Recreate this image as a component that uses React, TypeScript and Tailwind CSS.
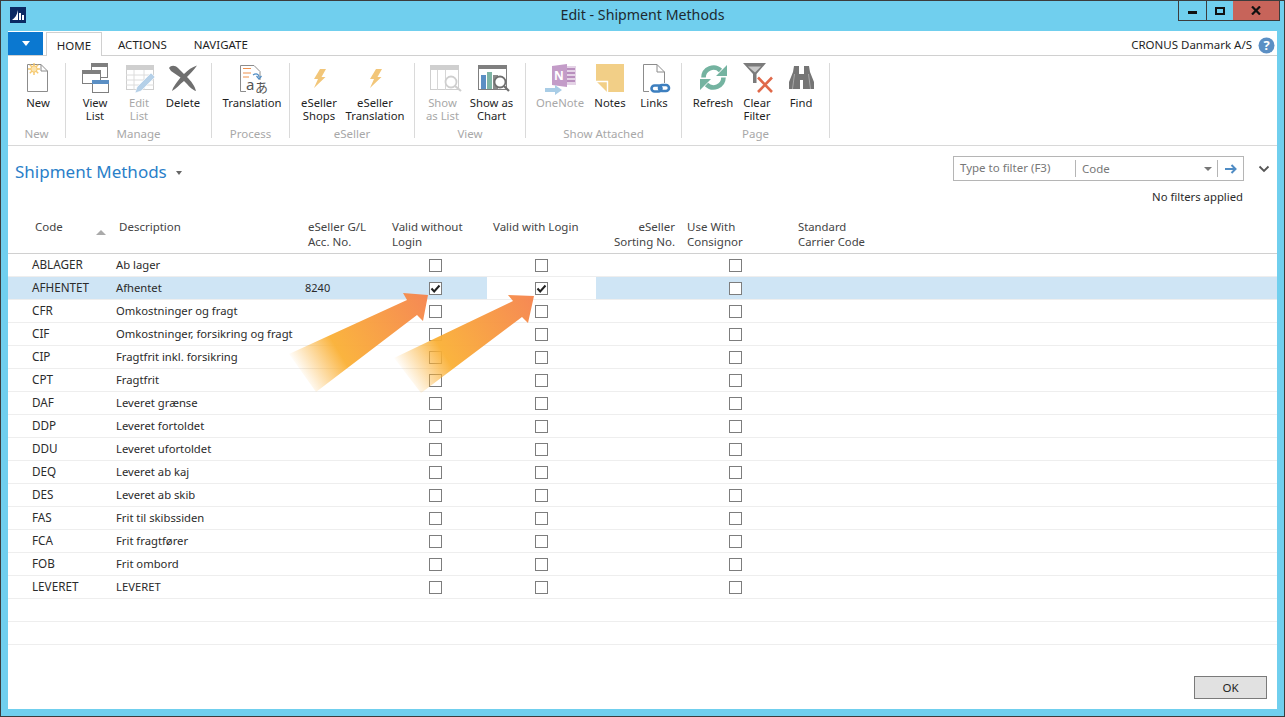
import React from 'react';

const font = { fontFamily: '"Noto Sans", "Open Sans", "Noto Sans CJK JP", sans-serif' };

type Row = { code: string; desc: string; gl?: string; a?: boolean; b?: boolean; selected?: boolean };

const rows: Row[] = [
  { code: 'ABLAGER', desc: 'Ab lager' },
  { code: 'AFHENTET', desc: 'Afhentet', gl: '8240', a: true, b: true, selected: true },
  { code: 'CFR', desc: 'Omkostninger og fragt' },
  { code: 'CIF', desc: 'Omkostninger, forsikring og fragt' },
  { code: 'CIP', desc: 'Fragtfrit inkl. forsikring' },
  { code: 'CPT', desc: 'Fragtfrit' },
  { code: 'DAF', desc: 'Leveret grænse' },
  { code: 'DDP', desc: 'Leveret fortoldet' },
  { code: 'DDU', desc: 'Leveret ufortoldet' },
  { code: 'DEQ', desc: 'Leveret ab kaj' },
  { code: 'DES', desc: 'Leveret ab skib' },
  { code: 'FAS', desc: 'Frit til skibssiden' },
  { code: 'FCA', desc: 'Frit fragtfører' },
  { code: 'FOB', desc: 'Frit ombord' },
  { code: 'LEVERET', desc: 'LEVERET' },
];

const cols = 'grid grid-cols-[24px_84px_189px_84px_98px_109px_88px_111px_1fr]';

function Icon({ children }: { children: React.ReactNode }) {
  return (
    <svg width="32" height="32" viewBox="0 0 32 32" className="shrink-0 overflow-visible">
      {children}
    </svg>
  );
}

const NewIcon = () => (
  <Icon>
    <path d="M5.5 2.5 H19 L25.5 9 V29.5 H5.5 Z M19 2.5 V9 H25.5" fill="#fff" stroke="#8c8c8c" />
    <g stroke="#f5c76a" strokeWidth="1.4">
      <path d="M12 1 V13 M6 7 H18 M7.8 2.8 L16.2 11.2 M16.2 2.8 L7.8 11.2" />
    </g>
    <circle cx="12" cy="7" r="3.2" fill="#fbe3ae" stroke="#f5c76a" />
  </Icon>
);

const ViewListIcon = () => (
  <Icon>
    <rect x="12.5" y="1.5" width="16" height="14" fill="#fff" stroke="#7f7f7f" />
    <rect x="12" y="1" width="17" height="4" fill="#7f7f7f" />
    <rect x="3.5" y="8.5" width="18" height="13" fill="#fff" stroke="#7f7f7f" />
    <rect x="3" y="8" width="19" height="4" fill="#7f7f7f" />
    <rect x="13.5" y="18.5" width="16" height="12" fill="#fff" stroke="#7f7f7f" />
    <rect x="13" y="18" width="17" height="4" fill="#5b8fc4" />
  </Icon>
);

const EditListIcon = () => (
  <Icon>
    <rect x="3.5" y="3.5" width="27" height="24" fill="#fff" stroke="#cfcfcf" />
    <rect x="3" y="3" width="28" height="5" fill="#cfcfcf" />
    <path d="M3 13 H31 M3 18 H31 M3 23 H31 M11 8 V28 M21 8 V28" stroke="#dcdcdc" />
    <path d="M12 31 L14 25 L28 11 L32 15 L18 29 Z" fill="#b5d0e8" stroke="#fff" strokeWidth="0.6" />
  </Icon>
);

const DeleteIcon = () => (
  <Icon>
    <path
      d="M2 6 C4 3 8 3 11 6 L17 12 C21 8 25 5 30 3.5 C27 8 23 12 20 15 C24 19 28 24 29 29 C25 28 21 23 17 19 C13 22 9 27 5 29 C6 25 10 20 13.5 15.5 L4 9 Z"
      fill="#6f6f6f"
    />
  </Icon>
);

const TranslationIcon = () => (
  <Icon>
    <path d="M4.5 3.5 H18 L24 9.5 V29.5 H4.5 Z" fill="#fff" stroke="#8c8c8c" />
    <path d="M7 6.5 H15 M7 11 H15 M7 15 H13" stroke="#f0914d" strokeWidth="1.2" />
    <path d="M17 13 C20 11 23 12 23 15" fill="none" stroke="#4f8cc4" strokeWidth="1.2" />
    <path d="M20.5 14 L23 17 L25.5 14" fill="none" stroke="#4f8cc4" strokeWidth="1.2" />
    <rect x="10" y="18" width="23" height="13" fill="#fff" />
    <text x="10" y="28" fontSize="15" fill="#555" style={font}>a</text>
    <text x="19" y="30" fontSize="13" fill="#555" style={font}>あ</text>
  </Icon>
);

const BoltIcon = () => (
  <Icon>
    <path d="M17 7 L23 7 L18.5 15 L22.5 15 L11 26 L15 17 L11 17 Z" fill="#f2c679" />
  </Icon>
);

const ShowListIcon = () => (
  <Icon>
    <rect x="3.5" y="3.5" width="28" height="24" fill="#fff" stroke="#cfcfcf" />
    <rect x="3" y="3" width="29" height="5" fill="#cfcfcf" />
    <path d="M10.5 8 V28 M18.5 8 V28" stroke="#d6d6d6" />
    <circle cx="24" cy="20" r="5.5" fill="#fff" stroke="#cfcfcf" strokeWidth="1.8" />
    <path d="M28 24 L34 29" stroke="#cfcfcf" strokeWidth="2.2" />
  </Icon>
);

const ShowChartIcon = () => (
  <Icon>
    <rect x="2.5" y="3.5" width="28" height="24" fill="#fff" stroke="#7f7f7f" />
    <rect x="2" y="3" width="29" height="4" fill="#7f7f7f" />
    <rect x="5" y="13" width="5" height="14" fill="#5b8fc4" />
    <rect x="11" y="10" width="5" height="17" fill="#7eb5a5" />
    <rect x="17" y="13" width="5" height="14" fill="#8a8a8a" />
    <circle cx="24" cy="20" r="5.5" fill="#fff" stroke="#6f6f6f" strokeWidth="1.8" />
    <path d="M28 24 L33 29" stroke="#6f6f6f" strokeWidth="2.2" />
  </Icon>
);

const OneNoteIcon = () => (
  <Icon>
    <rect x="18" y="4" width="14" height="19" fill="#e4d3e6" />
    <path d="M23 7 H31 M23 11 H31 M23 15 H31 M23 19 H31" stroke="#b98fbe" strokeWidth="2" />
    <path d="M8 4 L23 2 V25 L8 23 Z" fill="#c39cc8" />
    <text x="10" y="18" fontSize="12" fontWeight="700" fill="#fff" style={font}>N</text>
    <path d="M1 26 H11 V23 L18 28 L11 33 V30 H1 Z" fill="#a9cde6" />
  </Icon>
);

const NotesIcon = () => (
  <Icon>
    <path d="M2 2 H30 V30 H13 L2 19 Z" fill="#f2cf87" />
    <path d="M2 19.5 H13.5 V30" fill="none" stroke="#fff" strokeWidth="1.4" />
  </Icon>
);

const LinksIcon = () => (
  <Icon>
    <path d="M5.5 2.5 H19 L26.5 10 V29.5 H5.5 Z M19 2.5 V10 H26.5" fill="#fff" stroke="#8c8c8c" />
    <rect x="11" y="21" width="22" height="10" fill="#fff" />
    <rect x="13.5" y="23.5" width="10" height="6" rx="3" fill="none" stroke="#3d7fbf" strokeWidth="2.6" />
    <rect x="21" y="23" width="10" height="6" rx="3" fill="none" stroke="#3d7fbf" strokeWidth="2.6" />
  </Icon>
);

const RefreshIcon = () => (
  <Icon>
    <path d="M6.5 15.5 A10 10 0 0 1 23.5 8.5 M26.5 15.5 A10 10 0 0 1 9.5 22.5" fill="none" stroke="#74b3a0" strokeWidth="4.6" />
    <path d="M30 3 V14 H19 Z M3 28 V17 H14 Z" fill="#74b3a0" />
  </Icon>
);

const ClearFilterIcon = () => (
  <Icon>
    <path d="M2 1 H25 L15.5 12 V21 L12 21 V12 Z" fill="#7b7b7b" />
    <path d="M7 4.5 H20 L14 10.5 Z" fill="#c8c8c8" />
    <path d="M17 15.5 L31 30 M31 15.5 L17 30" stroke="#e0694a" strokeWidth="2.6" />
  </Icon>
);

const FindIcon = () => (
  <Icon>
    <path d="M9 4 H14 V12 H19 V4 H24 L25 10 L29 20 V27 H18 V18 H15 V27 H4 V20 L8 10 Z" fill="#757575" />
    <path d="M9.5 12 L7.5 27 M23.5 12 L25.5 27" stroke="#a8a8a8" />
  </Icon>
);

function Item({ w, label, icon, off }: { w: number; label: string[]; icon: React.ReactNode; off?: boolean }) {
  return (
    <div className="flex flex-col items-center shrink-0" style={{ width: w }}>
      {icon}
      <div className={`mt-[2px] text-center text-[11.3px] leading-[13px] whitespace-nowrap ${off ? 'text-[#a8a8a8]' : 'text-[#1f1f1f]'}`}>
        {label.map((l) => (
          <div key={l}>{l}</div>
        ))}
      </div>
    </div>
  );
}

function Group({ w, pl, title, children }: { w: number; pl: number; title: string; children: React.ReactNode }) {
  return (
    <div className="relative flex flex-col h-[75px] mt-[7px] border-r border-[#dadada]" style={{ width: w }}>
      <div className="flex flex-1 -mt-[1px]" style={{ paddingLeft: pl }}>
        {children}
      </div>
      <div className="text-center text-[#a8a8a8] leading-[13px] -mb-[2px]">{title}</div>
    </div>
  );
}

function Check({ checked }: { checked?: boolean }) {
  return (
    <span className="flex items-center justify-center w-[13px] h-[13px] border border-[#7d7d7d] bg-white">
      {checked && (
        <svg width="11" height="11" viewBox="0 0 11 11">
          <path d="M1.5 5.5 L4.2 8.5 L9.5 2.5" fill="none" stroke="#222" strokeWidth="2" />
        </svg>
      )}
    </span>
  );
}

function TableRow({ r }: { r: Row }) {
  return (
    <div className={`${cols} h-[23px] items-stretch border-b border-[#eeeeee] text-[#2b2b2b] ${r.selected ? 'bg-[#cfe5f5]' : ''}`}>
      <div />
      <div className="flex items-center text-[11.7px]">{r.code}</div>
      <div className="flex items-center whitespace-nowrap text-[11.25px]">{r.desc}</div>
      <div className="flex items-center text-[11px]">{r.gl}</div>
      <div className="flex items-center pl-[40px]"><Check checked={r.a} /></div>
      <div className={`flex items-center pl-[48px] ${r.selected ? 'bg-white' : ''}`}><Check checked={r.b} /></div>
      <div />
      <div className="flex items-center pl-[45px]"><Check /></div>
      <div />
    </div>
  );
}

function Arrows() {
  return (
    <svg width="1285" height="717" viewBox="0 0 1285 717" className="absolute left-0 top-0 pointer-events-none">
      <defs>
        <linearGradient id="arrowA" gradientUnits="userSpaceOnUse" x1="298" y1="372" x2="427" y2="294">
          <stop offset="0" stopColor="#fbb034" stopOpacity="0" />
          <stop offset="0.3" stopColor="#fab035" stopOpacity="0.95" />
          <stop offset="1" stopColor="#f5824c" stopOpacity="0.95" />
        </linearGradient>
        <linearGradient id="arrowB" gradientUnits="userSpaceOnUse" x1="403" y1="375" x2="533" y2="295">
          <stop offset="0" stopColor="#fbb034" stopOpacity="0" />
          <stop offset="0.3" stopColor="#fab035" stopOpacity="0.95" />
          <stop offset="1" stopColor="#f5824c" stopOpacity="0.95" />
        </linearGradient>
      </defs>
      <path d="M427 294 L402 292 L406 299 L288 353 L315 391 L416 314 L422 320 Z" fill="url(#arrowA)" />
      <path d="M533 295 L507 294 L512 300 L393 357 L420 392 L521 316 L527 322 Z" fill="url(#arrowB)" />
    </svg>
  );
}

export default function App() {
  return (
    <div className="relative w-[1285px] h-[717px] overflow-hidden flex flex-col border border-[#3c3c3c] bg-[#70cfee] text-[11.5px]" style={font}>
      <div className="relative flex items-start h-[30px] shrink-0">
        <svg width="16" height="16" viewBox="0 0 16 16" className="ml-[9px] mt-[6px]">
          <rect width="16" height="16" fill="#0b2a63" />
          <path d="M2 13 C5 11 7 8 8 3 V13 Z M9 6 L11 6 V13 H9 Z M12 8 H14 V13 H12 Z" fill="#fff" />
        </svg>
        <div className="absolute left-0 right-0 top-[4px] text-center text-[14.2px] leading-[20px] text-[#1d2a30]">Edit - Shipment Methods</div>
        <div className="absolute right-[4px] top-0 flex h-[20px] border border-t-0 border-[#3c3c3c]">
          <div className="w-[28px] flex items-center justify-center border-r border-[#3c3c3c]">
            <span className="block w-[9px] h-[3px] bg-[#111] mt-[3px]" />
          </div>
          <div className="w-[26px] flex items-center justify-center">
            <span className="block w-[10px] h-[8px] border-2 border-[#111]" />
          </div>
          <div className="w-[46px] flex items-center justify-center bg-[#c7645a]">
            <svg width="10" height="9" viewBox="0 0 10 9"><path d="M1 0.5 L9 8.5 M9 0.5 L1 8.5" stroke="#111" strokeWidth="2.2" /></svg>
          </div>
        </div>
      </div>

      <div className="flex-1 flex flex-col mx-[7px] mb-[7px] bg-white min-h-0">
        <div className="flex items-stretch h-[24px] mt-[1px] border-b border-[#d0d0d0] shrink-0">
          <div className="w-[35px] h-[23px] bg-[#0b78d0] flex items-center justify-center">
            <span className="block w-0 h-0 border-l-[4px] border-r-[4px] border-t-[5px] border-l-transparent border-r-transparent border-t-white" />
          </div>
          <div className="ml-[3px] w-[56px] h-[24px] border border-b-0 border-[#d0d0d0] bg-white text-center leading-[25px] text-[#1f1f1f]">HOME</div>
          <div className="ml-[16px] leading-[26px] text-[#1f1f1f]">ACTIONS</div>
          <div className="ml-[27px] leading-[26px] text-[#1f1f1f]">NAVIGATE</div>
          <div className="ml-auto flex items-center pr-[2px] pt-[3px] text-[#1f1f1f]">
            CRONUS Danmark A/S
            <svg width="17" height="17" viewBox="0 0 17 17" className="ml-[6px]">
              <circle cx="8.5" cy="8.5" r="8" fill="#5b8fc4" />
              <text x="8.5" y="13" fontSize="13" fontWeight="700" textAnchor="middle" fill="#fff" style={font}>?</text>
            </svg>
          </div>
        </div>

        <div className="flex h-[90px] border-b border-[#d8d8d8] shrink-0">
          <Group w={58} pl={14} title="New">
            <Item w={32} label={['New']} icon={<NewIcon />} />
          </Group>
          <Group w={146} pl={7} title="Manage">
            <Item w={44} label={['View', 'List']} icon={<ViewListIcon />} />
            <Item w={44} label={['Edit', 'List']} icon={<EditListIcon />} off />
            <Item w={44} label={['Delete']} icon={<DeleteIcon />} />
          </Group>
          <Group w={78} pl={2} title="Process">
            <Item w={76} label={['Translation']} icon={<TranslationIcon />} />
          </Group>
          <Group w={125} pl={1} title="eSeller">
            <Item w={56} label={['eSeller', 'Shops']} icon={<BoltIcon />} />
            <Item w={56} label={['eSeller', 'Translation']} icon={<BoltIcon />} />
          </Group>
          <Group w={111} pl={3} title="View">
            <Item w={49} label={['Show', 'as List']} icon={<ShowListIcon />} off />
            <Item w={49} label={['Show as', 'Chart']} icon={<ShowChartIcon />} />
          </Group>
          <Group w={156} pl={9} title="Show Attached">
            <Item w={50} label={['OneNote']} icon={<OneNoteIcon />} off />
            <Item w={50} label={['Notes']} icon={<NotesIcon />} />
            <Item w={38} label={['Links']} icon={<LinksIcon />} />
          </Group>
          <Group w={148} pl={9} title="Page">
            <Item w={44} label={['Refresh']} icon={<RefreshIcon />} />
            <Item w={44} label={['Clear', 'Filter']} icon={<ClearFilterIcon />} />
            <Item w={44} label={['Find']} icon={<FindIcon />} />
          </Group>
        </div>

        <div className="relative flex justify-between h-[66px] shrink-0">
          <div className="flex items-center h-[52px] pl-[7px]">
            <span className="text-[17px] text-[#2a7fc9]">Shipment Methods</span>
            <span className="ml-[9px] mt-[1px] block w-0 h-0 border-l-[3px] border-r-[3px] border-t-[4px] border-l-transparent border-r-transparent border-t-[#666]" />
          </div>
          <div className="flex flex-col items-end pr-[33px] pt-[10px]">
            <div className="flex items-center w-[291px] h-[25px] border border-[#b5b5b5] text-[#777]">
              <div className="w-[122px] pl-[6px] border-r border-[#b5b5b5] h-[17px] leading-[15px]">Type to filter (F3)</div>
              <div className="flex-1 pl-[6px]">Code</div>
              <span className="block w-0 h-0 border-l-[4px] border-r-[4px] border-t-[4px] border-l-transparent border-r-transparent border-t-[#777] mr-[5px]" />
              <div className="w-[26px] h-[17px] border-l border-[#b5b5b5] flex items-center justify-center">
                <svg width="12" height="10" viewBox="0 0 12 10"><path d="M0 5 H10 M6.5 1 L10.5 5 L6.5 9" fill="none" stroke="#4f8cc4" strokeWidth="2" /></svg>
              </div>
            </div>
            <div className="mt-[8px] mr-[1px] text-[11.3px] text-[#2b2b2b]">No filters applied</div>
            <svg width="12" height="8" viewBox="0 0 12 8" className="absolute right-[7px] top-[19px]">
              <path d="M1.5 1.5 L6 6 L10.5 1.5" fill="none" stroke="#555" strokeWidth="1.8" />
            </svg>
          </div>
        </div>

        <div className="shrink-0">
          <div className={`${cols} h-[42px] border-b border-[#d0d0d0] text-[#444] leading-[15px]`}>
            <div />
            <div className="relative pl-[3px] pt-[7px]">
              Code
              <span className="absolute left-[64px] top-[18px] block w-0 h-0 border-l-[5px] border-r-[5px] border-b-[5px] border-l-transparent border-r-transparent border-b-[#aaa]" />
            </div>
            <div className="pl-[3px] pt-[7px]">Description</div>
            <div className="pl-[3px] pt-[7px]">eSeller G/L<br />Acc. No.</div>
            <div className="pl-[3px] pt-[7px]">Valid without<br />Login</div>
            <div className="pl-[6px] pt-[7px]">Valid with Login</div>
            <div className="pr-[9px] pt-[7px] text-right">eSeller<br />Sorting No.</div>
            <div className="pl-[3px] pt-[7px]">Use With<br />Consignor</div>
            <div className="pl-[3px] pt-[7px] text-[11.3px]">Standard<br />Carrier Code</div>
          </div>
          {rows.map((r) => (
            <TableRow key={r.code} r={r} />
          ))}
          <div className="h-[23px] border-b border-[#eeeeee]" />
          <div className="h-[23px] border-b border-[#eeeeee]" />
        </div>

        <div className="mt-auto flex justify-end pr-[10px] pb-[10px]">
          <button className="w-[73px] h-[23px] bg-[#e1e1e1] border border-[#7a7a7a] text-[#1f1f1f]">OK</button>
        </div>
      </div>

      <Arrows />
    </div>
  );
}
